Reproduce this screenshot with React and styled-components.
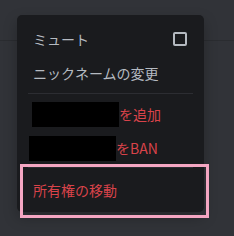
import React from 'react';
import styled, { createGlobalStyle } from 'styled-components';

const GlobalStyle = createGlobalStyle`
  html, body {
    margin: 0;
    padding: 0;
    background: #313338;
  }
  body {
    font-family: "Noto Sans CJK JP", "Noto Sans", sans-serif;
  }
`;

const Page = styled.div`
  position: relative;
  width: 234px;
  height: 236px;
  overflow: hidden;
  background: #313338;
`;

const HeaderStrip = styled.div`
  height: 40px;
  border-bottom: 1px solid #2a2c30;
`;

const Menu = styled.div`
  position: absolute;
  left: 17px;
  top: 15px;
  width: 187px;
  box-sizing: border-box;
  padding: 7px 10px 5px;
  background: #1a1b1e;
  border-radius: 5px;
  box-shadow: 0 6px 14px rgba(0, 0, 0, 0.25);
`;

const Item = styled.div`
  display: flex;
  align-items: center;
  justify-content: space-between;
  height: 34px;
  padding: 0 6px;
  font-size: 14px;
  line-height: 18px;
  color: ${p => (p.danger ? '#d9434a' : '#b5bac1')};
  white-space: nowrap;
`;

const Label = styled.span`
  display: flex;
  align-items: center;
`;

const Redacted = styled.span`
  display: inline-block;
  width: 87px;
  height: 25px;
  background: #000;
  margin-left: ${p => p.shift}px;
`;

const Checkbox = styled.span`
  width: 10px;
  height: 10px;
  border: 2px solid #b5bac1;
  border-radius: 2px;
  margin-right: 1px;
`;

const Separator = styled.div`
  height: 1px;
  margin: ${p => p.spacing};
  background: #2c2d32;
`;

const Highlight = styled.div`
  position: absolute;
  left: 3px;
  top: 149px;
  width: 189px;
  height: 54px;
  box-sizing: border-box;
  border: 3px solid #f4a6c2;
  pointer-events: none;
`;

export default function App() {
  return (
    <Page>
      <GlobalStyle />
      <HeaderStrip />
      <Menu>
        <Item>
          <Label>ミュート</Label>
          <Checkbox />
        </Item>
        <Item>
          <Label>ニックネームの変更</Label>
        </Item>
        <Separator spacing="3px 1px 3px" />
        <Item danger>
          <Label>
            <Redacted shift={-1} />を追加
          </Label>
        </Item>
        <Item danger>
          <Label>
            <Redacted shift={-4} />をBAN
          </Label>
        </Item>
        <Separator spacing="2px 1px 5px" />
        <Item danger>
          <Label>所有権の移動</Label>
        </Item>
        <Highlight />
      </Menu>
    </Page>
  );
}
